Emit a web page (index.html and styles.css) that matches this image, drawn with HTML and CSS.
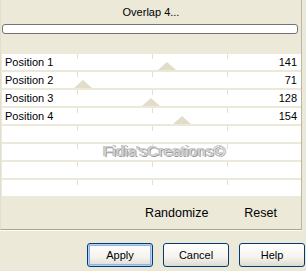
FILE: index.html
```html
<!DOCTYPE html>
<html>
<head>
    <title>Overlap</title>
    <link rel="stylesheet" href="styles.css">
</head>
<body>
    <div class="panel">
        <div class="title">Overlap 4...</div>
        <div class="progress"></div>
        <div class="rows">
            <div class="row">
                <span>Position 1</span><span>141</span>
                <i class="marker" style="left: 156px;"></i>
            </div>
            <div class="row">
                <span>Position 2</span><span>71</span>
                <i class="marker" style="left: 72px;"></i>
            </div>
            <div class="row">
                <span>Position 3</span><span>128</span>
                <i class="marker" style="left: 140px;"></i>
            </div>
            <div class="row">
                <span>Position 4</span><span>154</span>
                <i class="marker" style="left: 171px;"></i>
            </div>
            <div class="row empty"></div>
            <div class="row empty"></div>
            <div class="row empty"></div>
            <div class="row empty"></div>
            <div class="watermark">Fidia'sCreations©</div>
        </div>
        <div class="actions">
            <span class="link-btn">Randomize</span>
            <span class="link-btn">Reset</span>
        </div>
    </div>
    <div class="buttons">
        <button class="default">Apply</button>
        <button>Cancel</button>
        <button>Help</button>
    </div>
</body>
</html>
```

FILE: styles.css
```css
body {
    margin: 0;
    background-color: #ece9d8;
    font-family: "Liberation Sans", Arial, sans-serif;
    font-size: 11px;
    color: #000;
}
.panel {
    width: 300px;
    height: 229px;
    border-left: 1px solid #e2dfcf;
    border-right: 1px solid #b9b6a6;
    border-bottom: 1px solid #a9a696;
    box-shadow: 0 1px 0 #fbfaf5;
}
.title {
    height: 24px;
    line-height: 24px;
    text-align: center;
    font-size: 11px;
}
.progress {
    height: 8px;
    margin: 0 3px 20px 1px;
    border: 1px solid #737373;
    border-radius: 3px;
    background-color: #fff;
}
.rows {
    position: relative;
    margin-left: 1px;
    display: flex;
    flex-direction: column;
    gap: 2px;
}
.row {
    position: relative;
    height: 16px;
    padding: 0 4px 0 3px;
    display: flex;
    justify-content: space-between;
    align-items: center;
    background-color: #fff;
    background-image:
        linear-gradient(#e4e0ce, #e4e0ce),
        linear-gradient(#e4e0ce, #e4e0ce),
        linear-gradient(#e4e0ce, #e4e0ce);
    background-size: 1px 5px;
    background-position: 75px 0, 150px 0, 225px 0;
    background-repeat: no-repeat;
    overflow: hidden;
}
.row span {
    position: relative;
    z-index: 1;
}
.marker {
    position: absolute;
    bottom: 0;
    width: 0;
    height: 0;
    border-left: 9px solid transparent;
    border-right: 9px solid transparent;
    border-bottom: 8px solid #e2ddc9;
}
.watermark {
    position: absolute;
    left: 101px;
    top: 88px;
    font-size: 15.5px;
    color: #d2d2d2;
    text-shadow: 1px 1px 0 #9c9c9c, -1px 0 0 #b8b8b8;
}
.actions {
    height: 33px;
    display: flex;
    justify-content: flex-end;
    align-items: center;
    gap: 36px;
    padding-right: 24px;
    font-size: 12.5px;
}
.buttons {
    margin-top: 13px;
    display: flex;
    justify-content: flex-end;
    gap: 10px;
    padding-right: 1px;
}
button {
    width: 66px;
    height: 24px;
    padding: 0;
    font-family: "Liberation Sans", Arial, sans-serif;
    font-size: 11px;
    color: #000;
    border: 1px solid #003c74;
    border-radius: 3px;
    background: linear-gradient(#ffffff, #f4f3ee 60%, #dedbcf);
}
button.default {
    box-shadow: inset 0 0 0 1px #b8d0f4, inset 0 0 0 2px #8eb2ea;
}
```
